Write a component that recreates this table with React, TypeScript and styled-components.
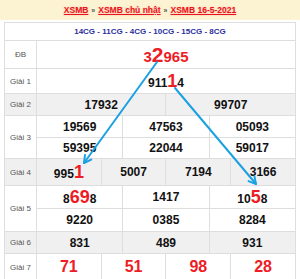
import React from "react";
import styled, { createGlobalStyle, css } from "styled-components";

const GlobalStyle = createGlobalStyle`
  html, body {
    margin: 0;
    padding: 0;
    background: #fff;
    font-family: "Liberation Sans", Arial, sans-serif;
  }
`;

type Arrow = { x1: number; y1: number; x2: number; y2: number };

const arrows: Arrow[] = [
  { x1: 157, y1: 62, x2: 84, y2: 163 },
  { x1: 175, y1: 88, x2: 256, y2: 184 },
];

const arrowHead = ({ x1, y1, x2, y2 }: Arrow) => {
  const len = Math.hypot(x2 - x1, y2 - y1);
  const bx = ((x1 - x2) / len) * 8;
  const by = ((y1 - y2) / len) * 8;
  const rot = (a: number) => [
    x2 + bx * Math.cos(a) - by * Math.sin(a),
    y2 + bx * Math.sin(a) + by * Math.cos(a),
  ];
  const [ax, ay] = rot(0.5);
  const [cx, cy] = rot(-0.5);
  return `${ax},${ay} ${x2},${y2} ${cx},${cy}`;
};

const App = () => {
  return (
    <Page>
      <GlobalStyle />
      <Breadcrumb>
        <Crumb>XSMB</Crumb>
        <Sep>»</Sep>
        <Crumb>XSMB chủ nhật</Crumb>
        <Sep>»</Sep>
        <Crumb>XSMB 16-5-2021</Crumb>
      </Breadcrumb>

      <Table>
        <colgroup>
          <col style={{ width: 32 }} />
          {Array.from({ length: 12 }).map((_, i) => (
            <col key={i} />
          ))}
        </colgroup>
        <tbody>
          <Row h={18}>
            <Codes colSpan={13}>14CG - 11CG - 4CG - 10CG - 15CG - 8CG</Codes>
          </Row>
          <Row h={28}>
            <Label>ĐB</Label>
            <Num colSpan={12} red>
              <Digit size={15}>3</Digit>
              <Digit size={21}>2</Digit>
              <Digit size={15}>965</Digit>
            </Num>
          </Row>
          <Row h={25}>
            <Label>Giải 1</Label>
            <Num colSpan={12}>
              911<Hit>1</Hit>4
            </Num>
          </Row>
          <Row h={22} shade>
            <Label>Giải 2</Label>
            <Num colSpan={6}>17932</Num>
            <Num colSpan={6}>99707</Num>
          </Row>
          <Row h={22}>
            <Label rowSpan={2}>Giải 3</Label>
            <Num colSpan={4}>19569</Num>
            <Num colSpan={4}>47563</Num>
            <Num colSpan={4}>05093</Num>
          </Row>
          <Row h={21}>
            <Num colSpan={4}>59395</Num>
            <Num colSpan={4}>22044</Num>
            <Num colSpan={4}>59017</Num>
          </Row>
          <Row h={27} shade>
            <Label>Giải 4</Label>
            <Num colSpan={3}>
              995<Hit>1</Hit>
            </Num>
            <Num colSpan={3}>5007</Num>
            <Num colSpan={3}>7194</Num>
            <Num colSpan={3}>3166</Num>
          </Row>
          <Row h={23}>
            <Label rowSpan={2}>Giải 5</Label>
            <Num colSpan={4}>
              8<Hit>69</Hit>8
            </Num>
            <Num colSpan={4}>1417</Num>
            <Num colSpan={4}>
              10<Hit>5</Hit>8
            </Num>
          </Row>
          <Row h={23}>
            <Num colSpan={4}>9220</Num>
            <Num colSpan={4}>0385</Num>
            <Num colSpan={4}>8284</Num>
          </Row>
          <Row h={22} shade>
            <Label>Giải 6</Label>
            <Num colSpan={4}>831</Num>
            <Num colSpan={4}>489</Num>
            <Num colSpan={4}>931</Num>
          </Row>
          <Row h={27}>
            <Label>Giải 7</Label>
            <Num colSpan={3} red last>71</Num>
            <Num colSpan={3} red last>51</Num>
            <Num colSpan={3} red last>98</Num>
            <Num colSpan={3} red last>28</Num>
          </Row>
        </tbody>
      </Table>

      <Overlay width="300" height="279" viewBox="0 0 300 279">
        {arrows.map((a, i) => (
          <g key={i} stroke="#1ba1e2" strokeWidth={2} fill="none" strokeLinecap="round">
            <line x1={a.x1} y1={a.y1} x2={a.x2} y2={a.y2} />
            <polyline points={arrowHead(a)} strokeLinejoin="round" />
          </g>
        ))}
      </Overlay>
    </Page>
  );
};

const Page = styled.div`
  position: relative;
  width: 300px;
  height: 279px;
  overflow: hidden;
`;

const Breadcrumb = styled.div`
  height: 20px;
  background: #fcf3d2;
  display: flex;
  align-items: center;
  justify-content: center;
  gap: 3px;
  font-size: 8.5px;
  font-weight: bold;
`;

const Crumb = styled.span`
  color: #e8131b;
  text-decoration: underline;
  text-shadow: 0 0 2px rgba(255, 80, 80, 0.35);
`;

const Sep = styled.span`
  color: #555;
  font-size: 7px;
`;

const Table = styled.table`
  margin: 2px 4px 0;
  width: 292px;
  table-layout: fixed;
  border-collapse: collapse;
  border: 1px solid #dedede;
`;

const Row = styled.tr<{ h: number; shade?: boolean }>`
  height: ${(p) => p.h}px;
  ${(p) =>
    p.shade &&
    css`
      background: #f0f0f0;
    `}
`;

const cell = css`
  border: 1px solid #dedede;
  padding: 0;
  text-align: center;
  vertical-align: middle;
  white-space: nowrap;
`;

const Codes = styled.td`
  ${cell};
  color: #2a2f9c;
  font-size: 8px;
  font-weight: bold;
`;

const Label = styled.td`
  ${cell};
  color: #555;
  font-size: 8px;
`;

const Num = styled.td<{ red?: boolean; last?: boolean }>`
  ${cell};
  color: ${(p) => (p.red ? "#ee1c25" : "#111")};
  font-size: ${(p) => (p.last ? 16 : 12)}px;
  font-weight: bold;
  line-height: 1;
`;

const Digit = styled.span<{ size: number }>`
  font-size: ${(p) => p.size}px;
`;

const Hit = styled.span`
  color: #ee1c25;
  font-size: 18px;
`;

const Overlay = styled.svg`
  position: absolute;
  top: 0;
  left: 0;
  pointer-events: none;
`;

export default App;
